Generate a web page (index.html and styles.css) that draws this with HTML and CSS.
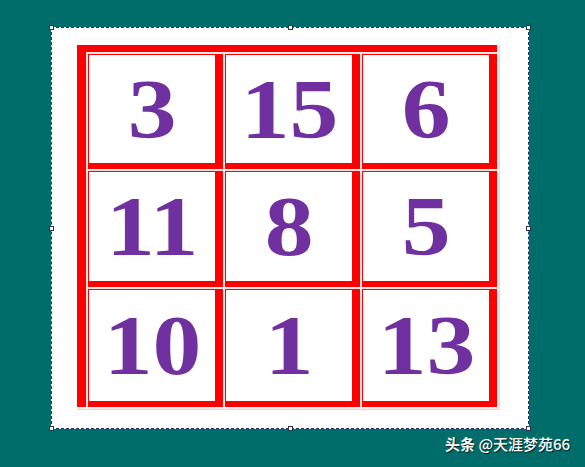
FILE: index.html
```html
<!DOCTYPE html>
<html>
<head>
<meta charset="utf-8">
<link rel="stylesheet" href="styles.css">
</head>
<body>
<div class="canvas">
  <div class="frame">
    <div class="board">
      <div class="cell"><div class="face"><span class="num">3</span></div></div>
      <div class="cell"><div class="face"><span class="num">15</span></div></div>
      <div class="cell"><div class="face"><span class="num">6</span></div></div>
      <div class="cell"><div class="face"><span class="num">11</span></div></div>
      <div class="cell"><div class="face"><span class="num">8</span></div></div>
      <div class="cell"><div class="face"><span class="num">5</span></div></div>
      <div class="cell"><div class="face"><span class="num">10</span></div></div>
      <div class="cell"><div class="face"><span class="num">1</span></div></div>
      <div class="cell"><div class="face"><span class="num">13</span></div></div>
    </div>
  </div>
  <span class="handle h-tl"></span>
  <span class="handle h-tm"></span>
  <span class="handle h-tr"></span>
  <span class="handle h-ml"></span>
  <span class="handle h-mr"></span>
  <span class="handle h-bl"></span>
  <span class="handle h-bm"></span>
  <span class="handle h-br"></span>
</div>
<div class="mark"><b>头条</b> @天涯梦苑66</div>
</body>
</html>
```
FILE: styles.css
```css
html, body {
  margin: 0;
  padding: 0;
}
body {
  background: #006d6a;
  width: 585px;
  height: 467px;
  overflow: hidden;
  position: relative;
  font-family: "Liberation Serif", serif;
}
.canvas {
  position: relative;
  margin: 27px 0 0 51px;
  background: #ffffff;
  border: 1px dashed #1d3a70;
  padding: 17px 0 0 25px;
  box-sizing: content-box;
  width: 451px;
  height: 383px;
}
.frame {
  width: 423px;
  background: #ffd0d0;
  padding: 0 1px 1px 0;
  box-sizing: border-box;
}
.board {
  display: grid;
  grid-template-columns: repeat(3, 137px);
  grid-template-rows: 117px 118px 120px;
  background: #ff0000;
  padding: 7px 0 0 9px;
  border-right: 2px solid #ffeeee;
  border-bottom: 2px solid #ffeeee;
}
.cell {
  border-left: 2px solid #ffe6e6;
  border-top: 2px solid #ffe6e6;
  padding: 1px 8px 6px 1px;
  background: #ff0000;
  display: flex;
}
.face {
  flex: 1;
  background: #ffffff;
  display: flex;
  align-items: center;
  justify-content: center;
}
.num {
  display: inline-block;
  font-family: "Liberation Serif", serif;
  font-weight: bold;
  font-size: 85px;
  line-height: 1;
  color: #7030a0;
  transform: scaleX(1.15);
}
.handle {
  position: absolute;
  width: 3px;
  height: 3px;
  background: #ffffff;
  border: 1px solid #2a3650;
}
.h-tl { left: -3px; top: -3px; }
.h-tm { left: 236px; top: -3px; }
.h-tr { right: -3px; top: -3px; }
.h-ml { left: -3px; top: 198px; }
.h-mr { right: -3px; top: 198px; }
.h-bl { left: -3px; bottom: -3px; }
.h-bm { left: 236px; bottom: -3px; }
.h-br { right: -3px; bottom: -3px; }
.mark {
  position: absolute;
  left: 445px;
  top: 434px;
  font-family: "Noto Sans CJK SC", "Noto Sans", sans-serif;
  font-size: 15px;
  font-weight: 500;
  line-height: 20px;
  color: #ffffff;
  text-shadow: 1px 1px 1px rgba(0, 0, 0, 0.7);
  white-space: nowrap;
}
```
